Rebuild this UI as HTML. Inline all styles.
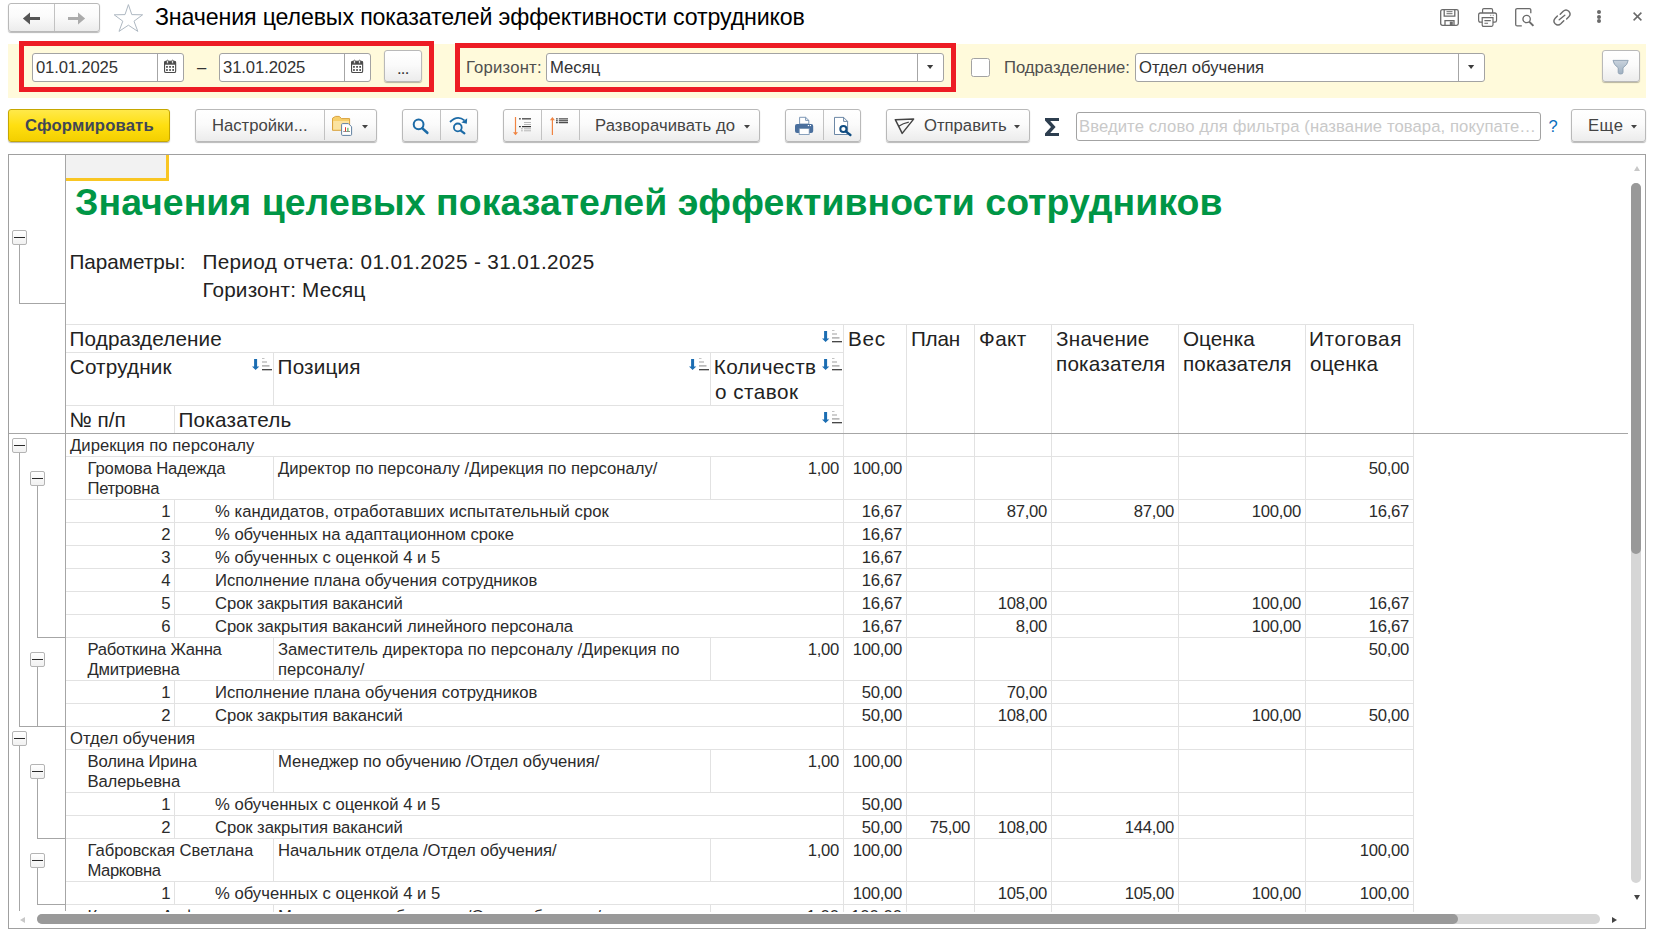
<!DOCTYPE html>
<html><head><meta charset="utf-8"><title>1C</title>
<style>
html,body{margin:0;padding:0;background:#fff;}
body{width:1655px;height:935px;overflow:hidden;position:relative;font-family:"Liberation Sans",sans-serif;}
.t{position:absolute;white-space:nowrap;}
.b{position:absolute;box-sizing:border-box;}
.btn{position:absolute;box-sizing:border-box;border:1px solid #b9b9b9;border-radius:3px;background:linear-gradient(#ffffff 0%,#fbfbfb 45%,#ececec 100%);box-shadow:0 1px 1px rgba(0,0,0,.28);}
.inp{position:absolute;box-sizing:border-box;border:1px solid #a3a3a3;border-radius:3px;background:#fff;}
svg{position:absolute;overflow:visible;}
</style></head><body>
<div class="btn" style="left:8px;top:3px;width:92px;height:29px;"></div>
<div class="b" style="left:54px;top:4px;width:1px;height:27px;background:#c2c2c2;"></div>
<div class="t" style="left:155.0px;top:3.46px;font-size:23.2px;line-height:29px;color:#000;letter-spacing:-0.14px;">Значения целевых показателей эффективности сотрудников</div>
<svg style="left:1440px;top:9px" width="19" height="17" viewBox="0 0 19 17" fill="none" stroke="#6a6a6a" stroke-width="1.3"><path d="M2.5 0.7 H16.5 Q18.3 0.7 18.3 2.5 V14.5 Q18.3 16.3 16.5 16.3 H2.5 Q0.7 16.3 0.7 14.5 V2.5 Q0.7 0.7 2.5 0.7 Z"/><path d="M4.2 0.7 V7.2 H14.8 V0.7"/><path d="M6.5 2.7 H12.5 M6.5 4.7 H12.5" stroke-width="1"/><path d="M5 16.3 V11.6 H14 V16.3"/><rect x="9.8" y="12.6" width="3" height="3.7" fill="#6a6a6a" stroke="none"/></svg>
<svg style="left:1478px;top:8px" width="19.2" height="19" viewBox="0 0 21 19" preserveAspectRatio="none" fill="none" stroke="#6a6a6a" stroke-width="1.3"><path d="M5 5 V2.2 Q5 0.7 6.5 0.7 H14.5 Q16 0.7 16 2.2 V5"/><path d="M4.6 14.2 H2.6 Q0.7 14.2 0.7 12.3 V7 Q0.7 5 2.6 5 H18.4 Q20.3 5 20.3 7 V12.3 Q20.3 14.2 18.4 14.2 H16.4"/><path d="M4.6 9.6 H16.4 V16.8 Q16.4 18.3 14.9 18.3 H6.1 Q4.6 18.3 4.6 16.8 Z"/><path d="M7 12.6 H14 M7 15.2 H11" stroke-width="1.1"/><path d="M13.6 7.3 H14.4 M16.2 7.3 H17" stroke-width="1.2"/></svg>
<svg style="left:1515px;top:8px" width="20" height="19" viewBox="0 0 20 19" fill="none" stroke="#6a6a6a" stroke-width="1.3"><path d="M15.8 5.2 V2.2 Q15.8 0.7 14.3 0.7 H2.2 Q0.7 0.7 0.7 2.2 V16.4 Q0.7 17.9 2.2 17.9 H6.8"/><circle cx="11.6" cy="11" r="3.7"/><path d="M14.4 13.9 L18.4 17.9" stroke-width="2"/></svg>
<svg style="left:1552px;top:8px" width="20" height="19" viewBox="0 0 20 19" fill="none" stroke="#6a6a6a" stroke-width="1.4" stroke-linecap="round"><path d="M8.2 6.2 L11.2 3.2 Q14 0.6 16.8 3.2 Q19.4 6 16.8 8.8 L14.6 11"/><path d="M11.8 12.8 L8.8 15.8 Q6 18.4 3.2 15.8 Q0.6 13 3.2 10.2 L5.4 8"/><path d="M7.2 11.8 L12.8 7.2"/></svg>
<div class="b" style="left:1597px;top:9.6px;width:4px;height:4px;background:#6a6a6a;border-radius:50%;"></div>
<div class="b" style="left:1597px;top:14.5px;width:4px;height:4px;background:#6a6a6a;border-radius:50%;"></div>
<div class="b" style="left:1597px;top:19.3px;width:4px;height:4px;background:#6a6a6a;border-radius:50%;"></div>
<svg style="left:1633px;top:12.3px" width="9" height="9" viewBox="0 0 9 9" stroke="#6a6a6a" stroke-width="1.5" fill="none"><path d="M0.6 0.6 L8.4 8.4 M8.4 0.6 L0.6 8.4"/></svg>
<div class="b" style="left:8px;top:44px;width:1638px;height:54px;background:#fffadb;"></div>
<div class="b" style="left:19px;top:41px;width:415px;height:51px;border:5px solid #ed1c24;"></div>
<div class="b" style="left:455px;top:43px;width:501px;height:49px;border:5px solid #ed1c24;"></div>
<div class="inp" style="left:32px;top:53px;width:152px;height:29px;"></div>
<div class="b" style="left:157px;top:54px;width:1px;height:27px;background:#a6a6a6;"></div>
<svg style="left:164px;top:60px" width="13" height="13" viewBox="0 0 13 13"><rect x="0.55" y="1.3" width="11.1" height="11.2" rx="1.3" fill="#fff" stroke="#4a4a4a" stroke-width="1.1"/><rect x="0.55" y="1.3" width="11.1" height="3.4" fill="#4a4a4a"/><ellipse cx="3.5" cy="1.9" rx="0.95" ry="1.75" fill="#fff" stroke="#4a4a4a" stroke-width="0.8"/><ellipse cx="8.6" cy="1.9" rx="0.95" ry="1.75" fill="#fff" stroke="#4a4a4a" stroke-width="0.8"/><g fill="#333"><rect x="2.1" y="6.1" width="1.7" height="1.6"/><rect x="5.2" y="6.1" width="1.7" height="1.6"/><rect x="8.3" y="6.1" width="1.7" height="1.6"/><rect x="2.1" y="9.2" width="1.7" height="1.6"/><rect x="5.2" y="9.2" width="1.7" height="1.6"/><rect x="8.3" y="9.2" width="1.7" height="1.6"/></g></svg>
<div class="inp" style="left:219px;top:53px;width:152px;height:29px;"></div>
<div class="b" style="left:344px;top:54px;width:1px;height:27px;background:#a6a6a6;"></div>
<svg style="left:351px;top:60px" width="13" height="13" viewBox="0 0 13 13"><rect x="0.55" y="1.3" width="11.1" height="11.2" rx="1.3" fill="#fff" stroke="#4a4a4a" stroke-width="1.1"/><rect x="0.55" y="1.3" width="11.1" height="3.4" fill="#4a4a4a"/><ellipse cx="3.5" cy="1.9" rx="0.95" ry="1.75" fill="#fff" stroke="#4a4a4a" stroke-width="0.8"/><ellipse cx="8.6" cy="1.9" rx="0.95" ry="1.75" fill="#fff" stroke="#4a4a4a" stroke-width="0.8"/><g fill="#333"><rect x="2.1" y="6.1" width="1.7" height="1.6"/><rect x="5.2" y="6.1" width="1.7" height="1.6"/><rect x="8.3" y="6.1" width="1.7" height="1.6"/><rect x="2.1" y="9.2" width="1.7" height="1.6"/><rect x="5.2" y="9.2" width="1.7" height="1.6"/><rect x="8.3" y="9.2" width="1.7" height="1.6"/></g></svg>
<div class="t" style="left:36.0px;top:57.02px;font-size:16.67px;line-height:21px;color:#333;letter-spacing:-0.156px;">01.01.2025</div>
<div class="t" style="left:223.0px;top:57.02px;font-size:16.67px;line-height:21px;color:#333;letter-spacing:-0.111px;">31.01.2025</div>
<div class="t" style="left:197px;top:57.02px;font-size:16.67px;line-height:21px;color:#333;">–</div>
<div class="btn" style="left:384px;top:50px;width:38px;height:32px;"></div>
<div class="t" style="left:397.0px;top:57.72px;font-size:16.67px;line-height:21px;color:#333;letter-spacing:-0.8px;">...</div>
<div class="t" style="left:466.0px;top:57.02px;font-size:16.67px;line-height:21px;color:#4f4f4f;letter-spacing:0.2px;">Горизонт:</div>
<div class="inp" style="left:546px;top:53px;width:398px;height:29px;"></div>
<div class="b" style="left:917px;top:54px;width:1px;height:27px;background:#a6a6a6;"></div>
<svg style="left:926.8px;top:64.9px" width="6.2" height="4" viewBox="0 0 6.2 4"><path d="M0 0 H6.2 L3.1 4 Z" fill="#3c3c3c"/></svg>
<div class="t" style="left:550.0px;top:57.02px;font-size:16.67px;line-height:21px;color:#333;">Месяц</div>
<div class="b" style="left:971px;top:58px;width:19px;height:19px;background:#fff;border:1px solid #a3a3a3;border-radius:2.5px;"></div>
<div class="t" style="left:1004.0px;top:57.02px;font-size:16.67px;line-height:21px;color:#4f4f4f;">Подразделение:</div>
<div class="inp" style="left:1135px;top:53px;width:350px;height:29px;"></div>
<div class="b" style="left:1458px;top:54px;width:1px;height:27px;background:#a6a6a6;"></div>
<svg style="left:1467.9px;top:64.9px" width="6.2" height="4" viewBox="0 0 6.2 4"><path d="M0 0 H6.2 L3.1 4 Z" fill="#3c3c3c"/></svg>
<div class="t" style="left:1139.0px;top:57.02px;font-size:16.67px;line-height:21px;color:#333;">Отдел обучения</div>
<div class="btn" style="left:1602px;top:50px;width:38px;height:32px;"></div>
<svg style="left:0;top:0" width="1655" height="100" viewBox="0 0 1655 100"><defs><linearGradient id="fg" x1="0" y1="0" x2="0" y2="1"><stop offset="0" stop-color="#c9d3dd"/><stop offset="1" stop-color="#9fb0c1"/></linearGradient></defs><path d="M1613 60.4 H1628.2 Q1627.6 64.8 1623 67.8 V72.4 Q1623 74 1620.6 74 Q1618.2 74 1618.2 72.4 V67.8 Q1613.6 64.8 1613 60.4 Z" fill="url(#fg)" stroke="#8d9fb1" stroke-width="0.9" stroke-linejoin="round"/></svg>
<div class="btn" style="left:8px;top:109px;width:162px;height:32.5px;border-color:#c6a700;background:linear-gradient(#ffe94a 0%,#ffdf10 50%,#f3cf00 100%);"></div>
<div class="t" style="left:25.0px;top:114.92px;font-size:16.67px;line-height:21px;color:#414756;font-weight:bold;letter-spacing:0.164px;">Сформировать</div>
<div class="btn" style="left:195px;top:109px;width:182px;height:32.5px;"></div>
<div class="b" style="left:324px;top:110px;width:1px;height:30px;background:#c2c2c2;"></div>
<div class="t" style="left:212.0px;top:114.92px;font-size:16.67px;line-height:21px;color:#444;">Настройки...</div>
<div class="btn" style="left:402px;top:109px;width:76px;height:32.5px;"></div>
<div class="b" style="left:440px;top:110px;width:1px;height:30px;background:#c2c2c2;"></div>
<div class="btn" style="left:503px;top:109px;width:257px;height:32.5px;"></div>
<div class="b" style="left:541px;top:110px;width:1px;height:30px;background:#c2c2c2;"></div>
<div class="b" style="left:579px;top:110px;width:1px;height:30px;background:#c2c2c2;"></div>
<div class="t" style="left:595.0px;top:114.92px;font-size:16.67px;line-height:21px;color:#444;letter-spacing:0.08px;">Разворачивать до</div>
<div class="btn" style="left:785px;top:109px;width:76px;height:32.5px;"></div>
<div class="b" style="left:823px;top:110px;width:1px;height:30px;background:#c2c2c2;"></div>
<div class="btn" style="left:886px;top:109px;width:143.5999999999999px;height:32.5px;"></div>
<div class="t" style="left:924.0px;top:114.92px;font-size:16.67px;line-height:21px;color:#444;">Отправить</div>
<div class="inp" style="left:1076px;top:112px;width:465px;height:29px;"></div>
<div class="t" style="left:1079.0px;top:116.22px;font-size:16.67px;line-height:21px;color:#c9c9c9;letter-spacing:0.085px;">Введите слово для фильтра (название товара, покупате…</div>
<div class="t" style="left:1548.6px;top:115.78px;font-size:16.5px;line-height:21px;color:#0a6ebd;">?</div>
<div class="btn" style="left:1571px;top:109px;width:75px;height:32.5px;"></div>
<div class="t" style="left:1588.0px;top:114.92px;font-size:16.67px;line-height:21px;color:#444;letter-spacing:0.5px;">Еще</div>
<svg style="left:362px;top:125px" width="6" height="4" viewBox="0 0 6 4"><path d="M0 0 H6 L3 3.4 Z" fill="#444"/></svg>
<svg style="left:744px;top:125px" width="6" height="4" viewBox="0 0 6 4"><path d="M0 0 H6 L3 3.4 Z" fill="#444"/></svg>
<svg style="left:1014px;top:125px" width="6" height="4" viewBox="0 0 6 4"><path d="M0 0 H6 L3 3.4 Z" fill="#444"/></svg>
<svg style="left:1631px;top:125px" width="6" height="4" viewBox="0 0 6 4"><path d="M0 0 H6 L3 3.4 Z" fill="#444"/></svg>
<svg style="left:1044px;top:118px" width="16" height="18" viewBox="0 0 16 18"><path d="M1 0 H15 V3 H6.2 L11.6 9 L6.2 15 H15 V18 H1 V15.6 L7 9 L1 2.4 Z" fill="#2d3e4f"/></svg>
<div class="b" style="left:8px;top:154px;width:1638px;height:775px;border:1px solid #a0a0a0;background:#fff;"></div>
<div class="b" style="left:65px;top:155px;width:1px;height:756px;background:#a6a6a6;"></div>
<div class="b" style="left:66px;top:155px;width:103px;height:26px;background:#f2f2f2;border-right:3px solid #f9c623;border-bottom:3px solid #f9c623;"></div>
<div class="t" style="left:75.0px;top:178.52px;font-size:37.45px;line-height:47px;color:#009646;font-weight:bold;letter-spacing:0.034px;">Значения целевых показателей эффективности сотрудников</div>
<div class="t" style="left:69.4px;top:249.33px;font-size:20.7px;line-height:26px;color:#222;">Параметры:</div>
<div class="t" style="left:202.4px;top:249.33px;font-size:20.7px;line-height:26px;color:#222;letter-spacing:0.368px;">Период отчета: 01.01.2025 - 31.01.2025</div>
<div class="t" style="left:202.4px;top:276.83px;font-size:20.7px;line-height:26px;color:#222;letter-spacing:0.214px;">Горизонт: Месяц</div>
<div class="b" style="left:66px;top:324px;width:1348px;height:1px;background:#e2e2e2;"></div>
<div class="b" style="left:66px;top:352px;width:778px;height:1px;background:#e2e2e2;"></div>
<div class="b" style="left:66px;top:405px;width:778px;height:1px;background:#e2e2e2;"></div>
<div class="b" style="left:843px;top:324px;width:1px;height:109px;background:#e2e2e2;"></div>
<div class="b" style="left:906px;top:324px;width:1px;height:109px;background:#e2e2e2;"></div>
<div class="b" style="left:974px;top:324px;width:1px;height:109px;background:#e2e2e2;"></div>
<div class="b" style="left:1051px;top:324px;width:1px;height:109px;background:#e2e2e2;"></div>
<div class="b" style="left:1178px;top:324px;width:1px;height:109px;background:#e2e2e2;"></div>
<div class="b" style="left:1305px;top:324px;width:1px;height:109px;background:#e2e2e2;"></div>
<div class="b" style="left:1413px;top:324px;width:1px;height:109px;background:#e2e2e2;"></div>
<div class="b" style="left:273px;top:352px;width:1px;height:53px;background:#e2e2e2;"></div>
<div class="b" style="left:710px;top:352px;width:1px;height:53px;background:#e2e2e2;"></div>
<div class="b" style="left:174px;top:405px;width:1px;height:28px;background:#e2e2e2;"></div>
<div class="b" style="left:9px;top:433px;width:1619px;height:1px;background:#a6a6a6;"></div>
<div class="t" style="left:69.6px;top:325.83px;font-size:20.7px;line-height:26px;color:#222;letter-spacing:0.117px;">Подразделение</div>
<div class="t" style="left:69.8px;top:353.83px;font-size:20.7px;line-height:26px;color:#222;letter-spacing:0.15px;">Сотрудник</div>
<div class="t" style="left:277.6px;top:353.83px;font-size:20.7px;line-height:26px;color:#222;letter-spacing:0.167px;">Позиция</div>
<div class="t" style="left:713.8px;top:353.83px;font-size:20.7px;line-height:26px;color:#222;letter-spacing:0.3px;">Количеств</div>
<div class="t" style="left:715.0px;top:378.83px;font-size:20.7px;line-height:26px;color:#222;letter-spacing:0.486px;">о ставок</div>
<div class="t" style="left:69.6px;top:406.83px;font-size:20.7px;line-height:26px;color:#222;">№ п/п</div>
<div class="t" style="left:178.4px;top:406.83px;font-size:20.7px;line-height:26px;color:#222;letter-spacing:0.267px;">Показатель</div>
<div class="t" style="left:848.0px;top:325.83px;font-size:20.7px;line-height:26px;color:#222;letter-spacing:0.75px;">Вес</div>
<div class="t" style="left:911.0px;top:325.83px;font-size:20.7px;line-height:26px;color:#222;letter-spacing:-0.267px;">План</div>
<div class="t" style="left:979.0px;top:325.83px;font-size:20.7px;line-height:26px;color:#222;letter-spacing:0.4px;">Факт</div>
<div class="t" style="left:1056.0px;top:325.83px;font-size:20.7px;line-height:26px;color:#222;letter-spacing:0.229px;">Значение</div>
<div class="t" style="left:1056.0px;top:350.83px;font-size:20.7px;line-height:26px;color:#222;letter-spacing:0.2px;">показателя</div>
<div class="t" style="left:1183.0px;top:325.83px;font-size:20.7px;line-height:26px;color:#222;">Оценка</div>
<div class="t" style="left:1183.0px;top:350.83px;font-size:20.7px;line-height:26px;color:#222;letter-spacing:0.111px;">показателя</div>
<div class="t" style="left:1309.0px;top:325.83px;font-size:20.7px;line-height:26px;color:#222;letter-spacing:0.686px;">Итоговая</div>
<div class="t" style="left:1310.0px;top:350.83px;font-size:20.7px;line-height:26px;color:#222;letter-spacing:0.2px;">оценка</div>
<svg style="left:822px;top:330px" width="21" height="13" viewBox="0 0 21 13"><path d="M2.1 0.9 H5.1 V8.4 H7.3 L3.6 11.9 L0 8.4 H2.1 Z" fill="#1b6db2"/><rect x="10" y="0" width="2.5" height="0.8" fill="#b5b5b5"/><rect x="10" y="3.4" width="5" height="1.2" fill="#b0b0b0"/><rect x="10" y="7.3" width="7.5" height="1.2" fill="#9a9a9a"/><rect x="10" y="11.1" width="10" height="1.2" fill="#333"/></svg>
<svg style="left:252px;top:358px" width="21" height="13" viewBox="0 0 21 13"><path d="M2.1 0.9 H5.1 V8.4 H7.3 L3.6 11.9 L0 8.4 H2.1 Z" fill="#1b6db2"/><rect x="10" y="0" width="2.5" height="0.8" fill="#b5b5b5"/><rect x="10" y="3.4" width="5" height="1.2" fill="#b0b0b0"/><rect x="10" y="7.3" width="7.5" height="1.2" fill="#9a9a9a"/><rect x="10" y="11.1" width="10" height="1.2" fill="#333"/></svg>
<svg style="left:689px;top:358px" width="21" height="13" viewBox="0 0 21 13"><path d="M2.1 0.9 H5.1 V8.4 H7.3 L3.6 11.9 L0 8.4 H2.1 Z" fill="#1b6db2"/><rect x="10" y="0" width="2.5" height="0.8" fill="#b5b5b5"/><rect x="10" y="3.4" width="5" height="1.2" fill="#b0b0b0"/><rect x="10" y="7.3" width="7.5" height="1.2" fill="#9a9a9a"/><rect x="10" y="11.1" width="10" height="1.2" fill="#333"/></svg>
<svg style="left:822px;top:358px" width="21" height="13" viewBox="0 0 21 13"><path d="M2.1 0.9 H5.1 V8.4 H7.3 L3.6 11.9 L0 8.4 H2.1 Z" fill="#1b6db2"/><rect x="10" y="0" width="2.5" height="0.8" fill="#b5b5b5"/><rect x="10" y="3.4" width="5" height="1.2" fill="#b0b0b0"/><rect x="10" y="7.3" width="7.5" height="1.2" fill="#9a9a9a"/><rect x="10" y="11.1" width="10" height="1.2" fill="#333"/></svg>
<svg style="left:822px;top:411px" width="21" height="13" viewBox="0 0 21 13"><path d="M2.1 0.9 H5.1 V8.4 H7.3 L3.6 11.9 L0 8.4 H2.1 Z" fill="#1b6db2"/><rect x="10" y="0" width="2.5" height="0.8" fill="#b5b5b5"/><rect x="10" y="3.4" width="5" height="1.2" fill="#b0b0b0"/><rect x="10" y="7.3" width="7.5" height="1.2" fill="#9a9a9a"/><rect x="10" y="11.1" width="10" height="1.2" fill="#333"/></svg>
<div class="b" style="left:12px;top:230px;width:15px;height:15px;border:1px solid #b4b4b4;border-radius:2px;background:linear-gradient(#fff,#f1f1f1);"></div>
<div class="b" style="left:14.4px;top:237px;width:10.3px;height:1px;background:#2a2a2a;"></div>
<div class="b" style="left:19px;top:245px;width:1px;height:59px;background:#a6a6a6;"></div>
<div class="b" style="left:19px;top:303px;width:46px;height:1px;background:#a6a6a6;"></div>
<div class="b" style="left:66px;top:456px;width:1348px;height:1px;background:#e2e2e2;"></div>
<div class="b" style="left:843px;top:434px;width:1px;height:22px;background:#e2e2e2;"></div>
<div class="b" style="left:906px;top:434px;width:1px;height:22px;background:#e2e2e2;"></div>
<div class="b" style="left:974px;top:434px;width:1px;height:22px;background:#e2e2e2;"></div>
<div class="b" style="left:1051px;top:434px;width:1px;height:22px;background:#e2e2e2;"></div>
<div class="b" style="left:1178px;top:434px;width:1px;height:22px;background:#e2e2e2;"></div>
<div class="b" style="left:1305px;top:434px;width:1px;height:22px;background:#e2e2e2;"></div>
<div class="b" style="left:1413px;top:434px;width:1px;height:22px;background:#e2e2e2;"></div>
<div class="t" style="left:70.0px;top:434.72px;font-size:16.67px;line-height:21px;color:#2b2b2b;letter-spacing:0.04px;">Дирекция по персоналу</div>
<div class="b" style="left:66px;top:499px;width:1348px;height:1px;background:#e2e2e2;"></div>
<div class="b" style="left:843px;top:457px;width:1px;height:42px;background:#e2e2e2;"></div>
<div class="b" style="left:906px;top:457px;width:1px;height:42px;background:#e2e2e2;"></div>
<div class="b" style="left:974px;top:457px;width:1px;height:42px;background:#e2e2e2;"></div>
<div class="b" style="left:1051px;top:457px;width:1px;height:42px;background:#e2e2e2;"></div>
<div class="b" style="left:1178px;top:457px;width:1px;height:42px;background:#e2e2e2;"></div>
<div class="b" style="left:1305px;top:457px;width:1px;height:42px;background:#e2e2e2;"></div>
<div class="b" style="left:1413px;top:457px;width:1px;height:42px;background:#e2e2e2;"></div>
<div class="b" style="left:273px;top:457px;width:1px;height:42px;background:#e2e2e2;"></div>
<div class="b" style="left:710px;top:457px;width:1px;height:42px;background:#e2e2e2;"></div>
<div class="t" style="left:87.5px;top:457.72px;font-size:16.67px;line-height:21px;color:#2b2b2b;letter-spacing:-0.143px;">Громова Надежда</div>
<div class="t" style="left:87.5px;top:477.72px;font-size:16.67px;line-height:21px;color:#2b2b2b;letter-spacing:-0.314px;">Петровна</div>
<div class="t" style="left:278.0px;top:457.72px;font-size:16.67px;line-height:21px;color:#2b2b2b;">Директор по персоналу /Дирекция по персоналу/</div>
<div class="t" style="left:439px;width:400px;text-align:right;top:457.72px;font-size:16.67px;line-height:21px;color:#2b2b2b;letter-spacing:-0.3px;">1,00</div>
<div class="t" style="left:502px;width:400px;text-align:right;top:457.72px;font-size:16.67px;line-height:21px;color:#2b2b2b;letter-spacing:-0.3px;">100,00</div>
<div class="t" style="left:1009px;width:400px;text-align:right;top:457.72px;font-size:16.67px;line-height:21px;color:#2b2b2b;letter-spacing:-0.3px;">50,00</div>
<div class="b" style="left:66px;top:522px;width:1348px;height:1px;background:#e2e2e2;"></div>
<div class="b" style="left:843px;top:500px;width:1px;height:22px;background:#e2e2e2;"></div>
<div class="b" style="left:906px;top:500px;width:1px;height:22px;background:#e2e2e2;"></div>
<div class="b" style="left:974px;top:500px;width:1px;height:22px;background:#e2e2e2;"></div>
<div class="b" style="left:1051px;top:500px;width:1px;height:22px;background:#e2e2e2;"></div>
<div class="b" style="left:1178px;top:500px;width:1px;height:22px;background:#e2e2e2;"></div>
<div class="b" style="left:1305px;top:500px;width:1px;height:22px;background:#e2e2e2;"></div>
<div class="b" style="left:1413px;top:500px;width:1px;height:22px;background:#e2e2e2;"></div>
<div class="b" style="left:174px;top:500px;width:1px;height:22px;background:#e2e2e2;"></div>
<div class="t" style="left:-229.6px;width:400px;text-align:right;top:500.72px;font-size:16.67px;line-height:21px;color:#2b2b2b;">1</div>
<div class="t" style="left:215.0px;top:500.72px;font-size:16.67px;line-height:21px;color:#2b2b2b;letter-spacing:0.055px;">% кандидатов, отработавших испытательный срок</div>
<div class="t" style="left:502px;width:400px;text-align:right;top:500.72px;font-size:16.67px;line-height:21px;color:#2b2b2b;letter-spacing:-0.3px;">16,67</div>
<div class="t" style="left:647px;width:400px;text-align:right;top:500.72px;font-size:16.67px;line-height:21px;color:#2b2b2b;letter-spacing:-0.3px;">87,00</div>
<div class="t" style="left:774px;width:400px;text-align:right;top:500.72px;font-size:16.67px;line-height:21px;color:#2b2b2b;letter-spacing:-0.3px;">87,00</div>
<div class="t" style="left:901px;width:400px;text-align:right;top:500.72px;font-size:16.67px;line-height:21px;color:#2b2b2b;letter-spacing:-0.3px;">100,00</div>
<div class="t" style="left:1009px;width:400px;text-align:right;top:500.72px;font-size:16.67px;line-height:21px;color:#2b2b2b;letter-spacing:-0.3px;">16,67</div>
<div class="b" style="left:66px;top:545px;width:1348px;height:1px;background:#e2e2e2;"></div>
<div class="b" style="left:843px;top:523px;width:1px;height:22px;background:#e2e2e2;"></div>
<div class="b" style="left:906px;top:523px;width:1px;height:22px;background:#e2e2e2;"></div>
<div class="b" style="left:974px;top:523px;width:1px;height:22px;background:#e2e2e2;"></div>
<div class="b" style="left:1051px;top:523px;width:1px;height:22px;background:#e2e2e2;"></div>
<div class="b" style="left:1178px;top:523px;width:1px;height:22px;background:#e2e2e2;"></div>
<div class="b" style="left:1305px;top:523px;width:1px;height:22px;background:#e2e2e2;"></div>
<div class="b" style="left:1413px;top:523px;width:1px;height:22px;background:#e2e2e2;"></div>
<div class="b" style="left:174px;top:523px;width:1px;height:22px;background:#e2e2e2;"></div>
<div class="t" style="left:-229.6px;width:400px;text-align:right;top:523.72px;font-size:16.67px;line-height:21px;color:#2b2b2b;">2</div>
<div class="t" style="left:215.0px;top:523.72px;font-size:16.67px;line-height:21px;color:#2b2b2b;letter-spacing:-0.03px;">% обученных на адаптационном сроке</div>
<div class="t" style="left:502px;width:400px;text-align:right;top:523.72px;font-size:16.67px;line-height:21px;color:#2b2b2b;letter-spacing:-0.3px;">16,67</div>
<div class="b" style="left:66px;top:568px;width:1348px;height:1px;background:#e2e2e2;"></div>
<div class="b" style="left:843px;top:546px;width:1px;height:22px;background:#e2e2e2;"></div>
<div class="b" style="left:906px;top:546px;width:1px;height:22px;background:#e2e2e2;"></div>
<div class="b" style="left:974px;top:546px;width:1px;height:22px;background:#e2e2e2;"></div>
<div class="b" style="left:1051px;top:546px;width:1px;height:22px;background:#e2e2e2;"></div>
<div class="b" style="left:1178px;top:546px;width:1px;height:22px;background:#e2e2e2;"></div>
<div class="b" style="left:1305px;top:546px;width:1px;height:22px;background:#e2e2e2;"></div>
<div class="b" style="left:1413px;top:546px;width:1px;height:22px;background:#e2e2e2;"></div>
<div class="b" style="left:174px;top:546px;width:1px;height:22px;background:#e2e2e2;"></div>
<div class="t" style="left:-229.6px;width:400px;text-align:right;top:546.72px;font-size:16.67px;line-height:21px;color:#2b2b2b;">3</div>
<div class="t" style="left:215.0px;top:546.72px;font-size:16.67px;line-height:21px;color:#2b2b2b;">% обученных с оценкой 4 и 5</div>
<div class="t" style="left:502px;width:400px;text-align:right;top:546.72px;font-size:16.67px;line-height:21px;color:#2b2b2b;letter-spacing:-0.3px;">16,67</div>
<div class="b" style="left:66px;top:591px;width:1348px;height:1px;background:#e2e2e2;"></div>
<div class="b" style="left:843px;top:569px;width:1px;height:22px;background:#e2e2e2;"></div>
<div class="b" style="left:906px;top:569px;width:1px;height:22px;background:#e2e2e2;"></div>
<div class="b" style="left:974px;top:569px;width:1px;height:22px;background:#e2e2e2;"></div>
<div class="b" style="left:1051px;top:569px;width:1px;height:22px;background:#e2e2e2;"></div>
<div class="b" style="left:1178px;top:569px;width:1px;height:22px;background:#e2e2e2;"></div>
<div class="b" style="left:1305px;top:569px;width:1px;height:22px;background:#e2e2e2;"></div>
<div class="b" style="left:1413px;top:569px;width:1px;height:22px;background:#e2e2e2;"></div>
<div class="b" style="left:174px;top:569px;width:1px;height:22px;background:#e2e2e2;"></div>
<div class="t" style="left:-229.6px;width:400px;text-align:right;top:569.72px;font-size:16.67px;line-height:21px;color:#2b2b2b;">4</div>
<div class="t" style="left:215.0px;top:569.72px;font-size:16.67px;line-height:21px;color:#2b2b2b;">Исполнение плана обучения сотрудников</div>
<div class="t" style="left:502px;width:400px;text-align:right;top:569.72px;font-size:16.67px;line-height:21px;color:#2b2b2b;letter-spacing:-0.3px;">16,67</div>
<div class="b" style="left:66px;top:614px;width:1348px;height:1px;background:#e2e2e2;"></div>
<div class="b" style="left:843px;top:592px;width:1px;height:22px;background:#e2e2e2;"></div>
<div class="b" style="left:906px;top:592px;width:1px;height:22px;background:#e2e2e2;"></div>
<div class="b" style="left:974px;top:592px;width:1px;height:22px;background:#e2e2e2;"></div>
<div class="b" style="left:1051px;top:592px;width:1px;height:22px;background:#e2e2e2;"></div>
<div class="b" style="left:1178px;top:592px;width:1px;height:22px;background:#e2e2e2;"></div>
<div class="b" style="left:1305px;top:592px;width:1px;height:22px;background:#e2e2e2;"></div>
<div class="b" style="left:1413px;top:592px;width:1px;height:22px;background:#e2e2e2;"></div>
<div class="b" style="left:174px;top:592px;width:1px;height:22px;background:#e2e2e2;"></div>
<div class="t" style="left:-229.6px;width:400px;text-align:right;top:592.72px;font-size:16.67px;line-height:21px;color:#2b2b2b;">5</div>
<div class="t" style="left:215.0px;top:592.72px;font-size:16.67px;line-height:21px;color:#2b2b2b;letter-spacing:-0.076px;">Срок закрытия вакансий</div>
<div class="t" style="left:502px;width:400px;text-align:right;top:592.72px;font-size:16.67px;line-height:21px;color:#2b2b2b;letter-spacing:-0.3px;">16,67</div>
<div class="t" style="left:647px;width:400px;text-align:right;top:592.72px;font-size:16.67px;line-height:21px;color:#2b2b2b;letter-spacing:-0.3px;">108,00</div>
<div class="t" style="left:901px;width:400px;text-align:right;top:592.72px;font-size:16.67px;line-height:21px;color:#2b2b2b;letter-spacing:-0.3px;">100,00</div>
<div class="t" style="left:1009px;width:400px;text-align:right;top:592.72px;font-size:16.67px;line-height:21px;color:#2b2b2b;letter-spacing:-0.3px;">16,67</div>
<div class="b" style="left:66px;top:637px;width:1348px;height:1px;background:#e2e2e2;"></div>
<div class="b" style="left:843px;top:615px;width:1px;height:22px;background:#e2e2e2;"></div>
<div class="b" style="left:906px;top:615px;width:1px;height:22px;background:#e2e2e2;"></div>
<div class="b" style="left:974px;top:615px;width:1px;height:22px;background:#e2e2e2;"></div>
<div class="b" style="left:1051px;top:615px;width:1px;height:22px;background:#e2e2e2;"></div>
<div class="b" style="left:1178px;top:615px;width:1px;height:22px;background:#e2e2e2;"></div>
<div class="b" style="left:1305px;top:615px;width:1px;height:22px;background:#e2e2e2;"></div>
<div class="b" style="left:1413px;top:615px;width:1px;height:22px;background:#e2e2e2;"></div>
<div class="b" style="left:174px;top:615px;width:1px;height:22px;background:#e2e2e2;"></div>
<div class="t" style="left:-229.6px;width:400px;text-align:right;top:615.72px;font-size:16.67px;line-height:21px;color:#2b2b2b;">6</div>
<div class="t" style="left:215.0px;top:615.72px;font-size:16.67px;line-height:21px;color:#2b2b2b;letter-spacing:-0.088px;">Срок закрытия вакансий линейного персонала</div>
<div class="t" style="left:502px;width:400px;text-align:right;top:615.72px;font-size:16.67px;line-height:21px;color:#2b2b2b;letter-spacing:-0.3px;">16,67</div>
<div class="t" style="left:647px;width:400px;text-align:right;top:615.72px;font-size:16.67px;line-height:21px;color:#2b2b2b;letter-spacing:-0.3px;">8,00</div>
<div class="t" style="left:901px;width:400px;text-align:right;top:615.72px;font-size:16.67px;line-height:21px;color:#2b2b2b;letter-spacing:-0.3px;">100,00</div>
<div class="t" style="left:1009px;width:400px;text-align:right;top:615.72px;font-size:16.67px;line-height:21px;color:#2b2b2b;letter-spacing:-0.3px;">16,67</div>
<div class="b" style="left:66px;top:680px;width:1348px;height:1px;background:#e2e2e2;"></div>
<div class="b" style="left:843px;top:638px;width:1px;height:42px;background:#e2e2e2;"></div>
<div class="b" style="left:906px;top:638px;width:1px;height:42px;background:#e2e2e2;"></div>
<div class="b" style="left:974px;top:638px;width:1px;height:42px;background:#e2e2e2;"></div>
<div class="b" style="left:1051px;top:638px;width:1px;height:42px;background:#e2e2e2;"></div>
<div class="b" style="left:1178px;top:638px;width:1px;height:42px;background:#e2e2e2;"></div>
<div class="b" style="left:1305px;top:638px;width:1px;height:42px;background:#e2e2e2;"></div>
<div class="b" style="left:1413px;top:638px;width:1px;height:42px;background:#e2e2e2;"></div>
<div class="b" style="left:273px;top:638px;width:1px;height:42px;background:#e2e2e2;"></div>
<div class="b" style="left:710px;top:638px;width:1px;height:42px;background:#e2e2e2;"></div>
<div class="t" style="left:87.5px;top:638.72px;font-size:16.67px;line-height:21px;color:#2b2b2b;letter-spacing:-0.264px;">Работкина Жанна</div>
<div class="t" style="left:87.5px;top:658.72px;font-size:16.67px;line-height:21px;color:#2b2b2b;letter-spacing:-0.289px;">Дмитриевна</div>
<div class="t" style="left:278.0px;top:638.72px;font-size:16.67px;line-height:21px;color:#2b2b2b;letter-spacing:0.02px;">Заместитель директора по персоналу /Дирекция по</div>
<div class="t" style="left:278px;top:658.72px;font-size:16.67px;line-height:21px;color:#2b2b2b;">персоналу/</div>
<div class="t" style="left:439px;width:400px;text-align:right;top:638.72px;font-size:16.67px;line-height:21px;color:#2b2b2b;letter-spacing:-0.3px;">1,00</div>
<div class="t" style="left:502px;width:400px;text-align:right;top:638.72px;font-size:16.67px;line-height:21px;color:#2b2b2b;letter-spacing:-0.3px;">100,00</div>
<div class="t" style="left:1009px;width:400px;text-align:right;top:638.72px;font-size:16.67px;line-height:21px;color:#2b2b2b;letter-spacing:-0.3px;">50,00</div>
<div class="b" style="left:66px;top:703px;width:1348px;height:1px;background:#e2e2e2;"></div>
<div class="b" style="left:843px;top:681px;width:1px;height:22px;background:#e2e2e2;"></div>
<div class="b" style="left:906px;top:681px;width:1px;height:22px;background:#e2e2e2;"></div>
<div class="b" style="left:974px;top:681px;width:1px;height:22px;background:#e2e2e2;"></div>
<div class="b" style="left:1051px;top:681px;width:1px;height:22px;background:#e2e2e2;"></div>
<div class="b" style="left:1178px;top:681px;width:1px;height:22px;background:#e2e2e2;"></div>
<div class="b" style="left:1305px;top:681px;width:1px;height:22px;background:#e2e2e2;"></div>
<div class="b" style="left:1413px;top:681px;width:1px;height:22px;background:#e2e2e2;"></div>
<div class="b" style="left:174px;top:681px;width:1px;height:22px;background:#e2e2e2;"></div>
<div class="t" style="left:-229.6px;width:400px;text-align:right;top:681.72px;font-size:16.67px;line-height:21px;color:#2b2b2b;">1</div>
<div class="t" style="left:215.0px;top:681.72px;font-size:16.67px;line-height:21px;color:#2b2b2b;">Исполнение плана обучения сотрудников</div>
<div class="t" style="left:502px;width:400px;text-align:right;top:681.72px;font-size:16.67px;line-height:21px;color:#2b2b2b;letter-spacing:-0.3px;">50,00</div>
<div class="t" style="left:647px;width:400px;text-align:right;top:681.72px;font-size:16.67px;line-height:21px;color:#2b2b2b;letter-spacing:-0.3px;">70,00</div>
<div class="b" style="left:66px;top:726px;width:1348px;height:1px;background:#e2e2e2;"></div>
<div class="b" style="left:843px;top:704px;width:1px;height:22px;background:#e2e2e2;"></div>
<div class="b" style="left:906px;top:704px;width:1px;height:22px;background:#e2e2e2;"></div>
<div class="b" style="left:974px;top:704px;width:1px;height:22px;background:#e2e2e2;"></div>
<div class="b" style="left:1051px;top:704px;width:1px;height:22px;background:#e2e2e2;"></div>
<div class="b" style="left:1178px;top:704px;width:1px;height:22px;background:#e2e2e2;"></div>
<div class="b" style="left:1305px;top:704px;width:1px;height:22px;background:#e2e2e2;"></div>
<div class="b" style="left:1413px;top:704px;width:1px;height:22px;background:#e2e2e2;"></div>
<div class="b" style="left:174px;top:704px;width:1px;height:22px;background:#e2e2e2;"></div>
<div class="t" style="left:-229.6px;width:400px;text-align:right;top:704.72px;font-size:16.67px;line-height:21px;color:#2b2b2b;">2</div>
<div class="t" style="left:215.0px;top:704.72px;font-size:16.67px;line-height:21px;color:#2b2b2b;letter-spacing:-0.076px;">Срок закрытия вакансий</div>
<div class="t" style="left:502px;width:400px;text-align:right;top:704.72px;font-size:16.67px;line-height:21px;color:#2b2b2b;letter-spacing:-0.3px;">50,00</div>
<div class="t" style="left:647px;width:400px;text-align:right;top:704.72px;font-size:16.67px;line-height:21px;color:#2b2b2b;letter-spacing:-0.3px;">108,00</div>
<div class="t" style="left:901px;width:400px;text-align:right;top:704.72px;font-size:16.67px;line-height:21px;color:#2b2b2b;letter-spacing:-0.3px;">100,00</div>
<div class="t" style="left:1009px;width:400px;text-align:right;top:704.72px;font-size:16.67px;line-height:21px;color:#2b2b2b;letter-spacing:-0.3px;">50,00</div>
<div class="b" style="left:66px;top:749px;width:1348px;height:1px;background:#e2e2e2;"></div>
<div class="b" style="left:843px;top:727px;width:1px;height:22px;background:#e2e2e2;"></div>
<div class="b" style="left:906px;top:727px;width:1px;height:22px;background:#e2e2e2;"></div>
<div class="b" style="left:974px;top:727px;width:1px;height:22px;background:#e2e2e2;"></div>
<div class="b" style="left:1051px;top:727px;width:1px;height:22px;background:#e2e2e2;"></div>
<div class="b" style="left:1178px;top:727px;width:1px;height:22px;background:#e2e2e2;"></div>
<div class="b" style="left:1305px;top:727px;width:1px;height:22px;background:#e2e2e2;"></div>
<div class="b" style="left:1413px;top:727px;width:1px;height:22px;background:#e2e2e2;"></div>
<div class="t" style="left:70.0px;top:727.72px;font-size:16.67px;line-height:21px;color:#2b2b2b;">Отдел обучения</div>
<div class="b" style="left:66px;top:792px;width:1348px;height:1px;background:#e2e2e2;"></div>
<div class="b" style="left:843px;top:750px;width:1px;height:42px;background:#e2e2e2;"></div>
<div class="b" style="left:906px;top:750px;width:1px;height:42px;background:#e2e2e2;"></div>
<div class="b" style="left:974px;top:750px;width:1px;height:42px;background:#e2e2e2;"></div>
<div class="b" style="left:1051px;top:750px;width:1px;height:42px;background:#e2e2e2;"></div>
<div class="b" style="left:1178px;top:750px;width:1px;height:42px;background:#e2e2e2;"></div>
<div class="b" style="left:1305px;top:750px;width:1px;height:42px;background:#e2e2e2;"></div>
<div class="b" style="left:1413px;top:750px;width:1px;height:42px;background:#e2e2e2;"></div>
<div class="b" style="left:273px;top:750px;width:1px;height:42px;background:#e2e2e2;"></div>
<div class="b" style="left:710px;top:750px;width:1px;height:42px;background:#e2e2e2;"></div>
<div class="t" style="left:87.5px;top:750.72px;font-size:16.67px;line-height:21px;color:#2b2b2b;letter-spacing:-0.155px;">Волина Ирина</div>
<div class="t" style="left:87.5px;top:770.72px;font-size:16.67px;line-height:21px;color:#2b2b2b;letter-spacing:-0.133px;">Валерьевна</div>
<div class="t" style="left:278.0px;top:750.72px;font-size:16.67px;line-height:21px;color:#2b2b2b;letter-spacing:-0.047px;">Менеджер по обучению /Отдел обучения/</div>
<div class="t" style="left:439px;width:400px;text-align:right;top:750.72px;font-size:16.67px;line-height:21px;color:#2b2b2b;letter-spacing:-0.3px;">1,00</div>
<div class="t" style="left:502px;width:400px;text-align:right;top:750.72px;font-size:16.67px;line-height:21px;color:#2b2b2b;letter-spacing:-0.3px;">100,00</div>
<div class="b" style="left:66px;top:815px;width:1348px;height:1px;background:#e2e2e2;"></div>
<div class="b" style="left:843px;top:793px;width:1px;height:22px;background:#e2e2e2;"></div>
<div class="b" style="left:906px;top:793px;width:1px;height:22px;background:#e2e2e2;"></div>
<div class="b" style="left:974px;top:793px;width:1px;height:22px;background:#e2e2e2;"></div>
<div class="b" style="left:1051px;top:793px;width:1px;height:22px;background:#e2e2e2;"></div>
<div class="b" style="left:1178px;top:793px;width:1px;height:22px;background:#e2e2e2;"></div>
<div class="b" style="left:1305px;top:793px;width:1px;height:22px;background:#e2e2e2;"></div>
<div class="b" style="left:1413px;top:793px;width:1px;height:22px;background:#e2e2e2;"></div>
<div class="b" style="left:174px;top:793px;width:1px;height:22px;background:#e2e2e2;"></div>
<div class="t" style="left:-229.6px;width:400px;text-align:right;top:793.72px;font-size:16.67px;line-height:21px;color:#2b2b2b;">1</div>
<div class="t" style="left:215.0px;top:793.72px;font-size:16.67px;line-height:21px;color:#2b2b2b;">% обученных с оценкой 4 и 5</div>
<div class="t" style="left:502px;width:400px;text-align:right;top:793.72px;font-size:16.67px;line-height:21px;color:#2b2b2b;letter-spacing:-0.3px;">50,00</div>
<div class="b" style="left:66px;top:838px;width:1348px;height:1px;background:#e2e2e2;"></div>
<div class="b" style="left:843px;top:816px;width:1px;height:22px;background:#e2e2e2;"></div>
<div class="b" style="left:906px;top:816px;width:1px;height:22px;background:#e2e2e2;"></div>
<div class="b" style="left:974px;top:816px;width:1px;height:22px;background:#e2e2e2;"></div>
<div class="b" style="left:1051px;top:816px;width:1px;height:22px;background:#e2e2e2;"></div>
<div class="b" style="left:1178px;top:816px;width:1px;height:22px;background:#e2e2e2;"></div>
<div class="b" style="left:1305px;top:816px;width:1px;height:22px;background:#e2e2e2;"></div>
<div class="b" style="left:1413px;top:816px;width:1px;height:22px;background:#e2e2e2;"></div>
<div class="b" style="left:174px;top:816px;width:1px;height:22px;background:#e2e2e2;"></div>
<div class="t" style="left:-229.6px;width:400px;text-align:right;top:816.72px;font-size:16.67px;line-height:21px;color:#2b2b2b;">2</div>
<div class="t" style="left:215.0px;top:816.72px;font-size:16.67px;line-height:21px;color:#2b2b2b;letter-spacing:-0.076px;">Срок закрытия вакансий</div>
<div class="t" style="left:502px;width:400px;text-align:right;top:816.72px;font-size:16.67px;line-height:21px;color:#2b2b2b;letter-spacing:-0.3px;">50,00</div>
<div class="t" style="left:570px;width:400px;text-align:right;top:816.72px;font-size:16.67px;line-height:21px;color:#2b2b2b;letter-spacing:-0.3px;">75,00</div>
<div class="t" style="left:647px;width:400px;text-align:right;top:816.72px;font-size:16.67px;line-height:21px;color:#2b2b2b;letter-spacing:-0.3px;">108,00</div>
<div class="t" style="left:774px;width:400px;text-align:right;top:816.72px;font-size:16.67px;line-height:21px;color:#2b2b2b;letter-spacing:-0.3px;">144,00</div>
<div class="b" style="left:66px;top:881px;width:1348px;height:1px;background:#e2e2e2;"></div>
<div class="b" style="left:843px;top:839px;width:1px;height:42px;background:#e2e2e2;"></div>
<div class="b" style="left:906px;top:839px;width:1px;height:42px;background:#e2e2e2;"></div>
<div class="b" style="left:974px;top:839px;width:1px;height:42px;background:#e2e2e2;"></div>
<div class="b" style="left:1051px;top:839px;width:1px;height:42px;background:#e2e2e2;"></div>
<div class="b" style="left:1178px;top:839px;width:1px;height:42px;background:#e2e2e2;"></div>
<div class="b" style="left:1305px;top:839px;width:1px;height:42px;background:#e2e2e2;"></div>
<div class="b" style="left:1413px;top:839px;width:1px;height:42px;background:#e2e2e2;"></div>
<div class="b" style="left:273px;top:839px;width:1px;height:42px;background:#e2e2e2;"></div>
<div class="b" style="left:710px;top:839px;width:1px;height:42px;background:#e2e2e2;"></div>
<div class="t" style="left:87.5px;top:839.72px;font-size:16.67px;line-height:21px;color:#2b2b2b;letter-spacing:-0.078px;">Габровская Светлана</div>
<div class="t" style="left:87.5px;top:859.72px;font-size:16.67px;line-height:21px;color:#2b2b2b;letter-spacing:-0.457px;">Марковна</div>
<div class="t" style="left:278.0px;top:839.72px;font-size:16.67px;line-height:21px;color:#2b2b2b;letter-spacing:-0.041px;">Начальник отдела /Отдел обучения/</div>
<div class="t" style="left:439px;width:400px;text-align:right;top:839.72px;font-size:16.67px;line-height:21px;color:#2b2b2b;letter-spacing:-0.3px;">1,00</div>
<div class="t" style="left:502px;width:400px;text-align:right;top:839.72px;font-size:16.67px;line-height:21px;color:#2b2b2b;letter-spacing:-0.3px;">100,00</div>
<div class="t" style="left:1009px;width:400px;text-align:right;top:839.72px;font-size:16.67px;line-height:21px;color:#2b2b2b;letter-spacing:-0.3px;">100,00</div>
<div class="b" style="left:66px;top:904px;width:1348px;height:1px;background:#e2e2e2;"></div>
<div class="b" style="left:843px;top:882px;width:1px;height:22px;background:#e2e2e2;"></div>
<div class="b" style="left:906px;top:882px;width:1px;height:22px;background:#e2e2e2;"></div>
<div class="b" style="left:974px;top:882px;width:1px;height:22px;background:#e2e2e2;"></div>
<div class="b" style="left:1051px;top:882px;width:1px;height:22px;background:#e2e2e2;"></div>
<div class="b" style="left:1178px;top:882px;width:1px;height:22px;background:#e2e2e2;"></div>
<div class="b" style="left:1305px;top:882px;width:1px;height:22px;background:#e2e2e2;"></div>
<div class="b" style="left:1413px;top:882px;width:1px;height:22px;background:#e2e2e2;"></div>
<div class="b" style="left:174px;top:882px;width:1px;height:22px;background:#e2e2e2;"></div>
<div class="t" style="left:-229.6px;width:400px;text-align:right;top:882.72px;font-size:16.67px;line-height:21px;color:#2b2b2b;">1</div>
<div class="t" style="left:215.0px;top:882.72px;font-size:16.67px;line-height:21px;color:#2b2b2b;">% обученных с оценкой 4 и 5</div>
<div class="t" style="left:502px;width:400px;text-align:right;top:882.72px;font-size:16.67px;line-height:21px;color:#2b2b2b;letter-spacing:-0.3px;">100,00</div>
<div class="t" style="left:647px;width:400px;text-align:right;top:882.72px;font-size:16.67px;line-height:21px;color:#2b2b2b;letter-spacing:-0.3px;">105,00</div>
<div class="t" style="left:774px;width:400px;text-align:right;top:882.72px;font-size:16.67px;line-height:21px;color:#2b2b2b;letter-spacing:-0.3px;">105,00</div>
<div class="t" style="left:901px;width:400px;text-align:right;top:882.72px;font-size:16.67px;line-height:21px;color:#2b2b2b;letter-spacing:-0.3px;">100,00</div>
<div class="t" style="left:1009px;width:400px;text-align:right;top:882.72px;font-size:16.67px;line-height:21px;color:#2b2b2b;letter-spacing:-0.3px;">100,00</div>
<div class="b" style="left:66px;top:905px;width:1348px;height:7.4px;overflow:hidden;">
<div class="t" style="left:21.5px;top:0.7px;font-size:16.67px;line-height:21px;color:#2b2b2b;">Круглова Анфиса</div>
<div class="t" style="left:212px;top:0.7px;font-size:16.67px;line-height:21px;color:#2b2b2b;">Менеджер по обучению /Отдел обучения/</div>
<div class="t" style="left:373px;top:0.7px;width:400px;text-align:right;font-size:16.67px;line-height:21px;color:#2b2b2b;">1,00</div>
<div class="t" style="left:436px;top:0.7px;width:400px;text-align:right;font-size:16.67px;line-height:21px;color:#2b2b2b;">100,00</div>
</div>
<div class="b" style="left:843px;top:905px;width:1px;height:7px;background:#e2e2e2;"></div>
<div class="b" style="left:906px;top:905px;width:1px;height:7px;background:#e2e2e2;"></div>
<div class="b" style="left:974px;top:905px;width:1px;height:7px;background:#e2e2e2;"></div>
<div class="b" style="left:1051px;top:905px;width:1px;height:7px;background:#e2e2e2;"></div>
<div class="b" style="left:1178px;top:905px;width:1px;height:7px;background:#e2e2e2;"></div>
<div class="b" style="left:1305px;top:905px;width:1px;height:7px;background:#e2e2e2;"></div>
<div class="b" style="left:1413px;top:905px;width:1px;height:7px;background:#e2e2e2;"></div>
<div class="b" style="left:273px;top:905px;width:1px;height:7px;background:#e2e2e2;"></div>
<div class="b" style="left:710px;top:905px;width:1px;height:7px;background:#e2e2e2;"></div>
<div class="b" style="left:12px;top:438px;width:15px;height:15px;border:1px solid #b4b4b4;border-radius:2px;background:linear-gradient(#fff,#f1f1f1);"></div>
<div class="b" style="left:14.4px;top:445px;width:10.3px;height:1px;background:#2a2a2a;"></div>
<div class="b" style="left:19px;top:453px;width:1px;height:274px;background:#a6a6a6;"></div>
<div class="b" style="left:19px;top:726px;width:46px;height:1px;background:#a6a6a6;"></div>
<div class="b" style="left:12px;top:731px;width:15px;height:15px;border:1px solid #b4b4b4;border-radius:2px;background:linear-gradient(#fff,#f1f1f1);"></div>
<div class="b" style="left:14.4px;top:738px;width:10.3px;height:1px;background:#2a2a2a;"></div>
<div class="b" style="left:19px;top:746px;width:1px;height:165px;background:#a6a6a6;"></div>
<div class="b" style="left:30px;top:471px;width:15px;height:15px;border:1px solid #b4b4b4;border-radius:2px;background:linear-gradient(#fff,#f1f1f1);"></div>
<div class="b" style="left:32.4px;top:478px;width:10.3px;height:1px;background:#2a2a2a;"></div>
<div class="b" style="left:37px;top:486px;width:1px;height:152px;background:#a6a6a6;"></div>
<div class="b" style="left:37px;top:637px;width:28px;height:1px;background:#a6a6a6;"></div>
<div class="b" style="left:30px;top:652px;width:15px;height:15px;border:1px solid #b4b4b4;border-radius:2px;background:linear-gradient(#fff,#f1f1f1);"></div>
<div class="b" style="left:32.4px;top:659px;width:10.3px;height:1px;background:#2a2a2a;"></div>
<div class="b" style="left:37px;top:667px;width:1px;height:60px;background:#a6a6a6;"></div>
<div class="b" style="left:30px;top:764px;width:15px;height:15px;border:1px solid #b4b4b4;border-radius:2px;background:linear-gradient(#fff,#f1f1f1);"></div>
<div class="b" style="left:32.4px;top:771px;width:10.3px;height:1px;background:#2a2a2a;"></div>
<div class="b" style="left:37px;top:779px;width:1px;height:60px;background:#a6a6a6;"></div>
<div class="b" style="left:37px;top:838px;width:28px;height:1px;background:#a6a6a6;"></div>
<div class="b" style="left:30px;top:853px;width:15px;height:15px;border:1px solid #b4b4b4;border-radius:2px;background:linear-gradient(#fff,#f1f1f1);"></div>
<div class="b" style="left:32.4px;top:860px;width:10.3px;height:1px;background:#2a2a2a;"></div>
<div class="b" style="left:37px;top:868px;width:1px;height:37px;background:#a6a6a6;"></div>
<div class="b" style="left:37px;top:904px;width:28px;height:1px;background:#a6a6a6;"></div>
<div class="b" style="left:1631px;top:183px;width:10px;height:700px;background:#d6d6d6;border-radius:5px;"></div>
<div class="b" style="left:1631px;top:183px;width:10px;height:371px;background:#999;border-radius:5px;"></div>
<svg style="left:1634px;top:166px" width="6" height="5" viewBox="0 0 6 5"><path d="M3 0 L6 5 H0 Z" fill="#c8c8c8"/></svg>
<svg style="left:1634px;top:895px" width="6" height="5" viewBox="0 0 6 5"><path d="M0 0 H6 L3 5 Z" fill="#444"/></svg>
<div class="b" style="left:37px;top:914px;width:1563px;height:10px;background:#d6d6d6;border-radius:5px;"></div>
<div class="b" style="left:37px;top:914px;width:1421px;height:10px;background:#999;border-radius:5px;"></div>
<svg style="left:20px;top:917px" width="5" height="6" viewBox="0 0 5 6"><path d="M0 3 L5 0 V6 Z" fill="#c8c8c8"/></svg>
<svg style="left:1612px;top:917px" width="5" height="6" viewBox="0 0 5 6"><path d="M5 3 L0 0 V6 Z" fill="#444"/></svg>
<svg style="left:0;top:0" width="1655" height="935" viewBox="0 0 1655 935"><path d="M22.9 18.4 L30 12.4 V17 H40 V20 H30 V24.5 Z" fill="#555"/><path d="M85.1 18.4 L78 12.4 V17 H68 V20 H78 V24.5 Z" fill="#ababab"/><path d="M128.4 4.6 L131.8 14.6 L142.6 14.8 L134 21.2 L137.8 31.4 L128.4 25.2 L119 31.4 L122.8 21.2 L114.2 14.8 L125 14.6 Z" fill="#fff" stroke="#aeb8c2" stroke-width="1" stroke-linejoin="miter"/><path d="M332.5 130.3 V118.2 L335.5 116.4 H339.2 L341.6 118.6 H349.6 V130.3 Z" fill="#f7cf6a" stroke="#d9a23e" stroke-width="1"/><path d="M333.2 121 H349 V129.6 H333.2 Z" fill="#fbe3a0"/><path d="M341.6 124.6 Q341.6 123.6 342.6 123.6 H348.4 L351.6 126.8 V134.4 Q351.6 135.4 350.6 135.4 H342.6 Q341.6 135.4 341.6 134.4 Z" fill="#fff" stroke="#5f7f9f" stroke-width="1"/><path d="M343.2 131.5 H350" stroke="#777" stroke-width="0.8"/><rect x="345" y="127.2" width="1" height="4.2" fill="#e03a2f"/><rect x="347.4" y="127.8" width="1" height="3.6" fill="#3aa33a"/><circle cx="418.6" cy="124.3" r="4.9" fill="none" stroke="#1b6aa6" stroke-width="2"/><path d="M422.4 128.4 L427.3 132.8" stroke="#1b6aa6" stroke-width="2.6" stroke-linecap="round"/><circle cx="457.8" cy="127.4" r="3.9" fill="none" stroke="#1b6aa6" stroke-width="1.8"/><path d="M460.8 130.6 L464.4 133.4" stroke="#1b6aa6" stroke-width="2.2" stroke-linecap="round"/><path d="M450 122 Q457.5 114.6 464.4 120.4" fill="none" stroke="#1b6aa6" stroke-width="1.8"/><path d="M467.2 118.2 L466.8 123.8 L461.4 122.6 Z" fill="#1b6aa6"/><path d="M515.5 117 V133" stroke="#f08442" stroke-width="1.2"/><path d="M513 132.2 H518 L515.5 135.2 Z" fill="#f08442"/><rect x="522" y="118.3" width="9" height="1.1" fill="#222"/><rect x="524" y="122.2" width="7" height="0.7" fill="#9a9a9a"/><rect x="524" y="124.2" width="7" height="0.7" fill="#9a9a9a"/><rect x="522" y="126.1" width="9" height="1.1" fill="#222"/><rect x="524" y="128.5" width="7" height="0.7" fill="#9a9a9a"/><rect x="524" y="130.5" width="7" height="0.7" fill="#9a9a9a"/><rect x="519" y="118.3" width="1.8" height="1.1" fill="#222"/><rect x="519" y="126.1" width="1.8" height="1.1" fill="#222"/><rect x="521" y="128.5" width="1.8" height="0.7" fill="#9a9a9a"/><rect x="521" y="130.5" width="1.8" height="0.7" fill="#9a9a9a"/><path d="M552.4 120 V135" stroke="#f08442" stroke-width="1.2"/><path d="M549.9 120.2 H554.9 L552.4 117 Z" fill="#f08442"/><rect x="558.8" y="118.4" width="9.2" height="1" fill="#222"/><rect x="556" y="118.4" width="1.8" height="1" fill="#222"/><rect x="558.8" y="120.3" width="9.2" height="1" fill="#222"/><rect x="556" y="120.3" width="1.8" height="1" fill="#222"/><rect x="558.8" y="122.2" width="9.2" height="1" fill="#222"/><rect x="556" y="122.2" width="1.8" height="1" fill="#222"/><path d="M799.6 124 V117.3 H805.6 L808.8 120.4 V124 Z" fill="#fff" stroke="#6f8cae" stroke-width="0.9"/><path d="M805.6 117.3 V120.4 H808.8" fill="none" stroke="#6f8cae" stroke-width="0.9"/><rect x="795" y="123.9" width="18.2" height="9.2" rx="2" fill="#4a6f9d"/><rect x="799.2" y="128.4" width="10" height="6" fill="#fff" stroke="#6f8cae" stroke-width="0.8"/><rect x="807.8" y="125" width="1.2" height="1.1" fill="#fff"/><rect x="809.8" y="125" width="1.2" height="1.1" fill="#fff"/><path d="M834.5 117.4 H843.6 L847.6 121.4 V134.5 H834.5 Z" fill="#fff" stroke="#5c7a9c" stroke-width="0.9"/><path d="M843.6 117.4 V121.4 H847.6" fill="none" stroke="#5c7a9c" stroke-width="0.9"/><circle cx="843.4" cy="129" r="3.1" fill="#fff" stroke="#0f4c81" stroke-width="2"/><path d="M846 131.6 L850.4 135" stroke="#0f4c81" stroke-width="2.4" stroke-linecap="round"/><path d="M895.3 119.7 L913.6 119.1 L902.2 133.4 L898.7 126.3 Z" fill="none" stroke="#444" stroke-width="1.5" stroke-linejoin="round"/><path d="M898.7 126.3 Q903 123.4 908.8 122.2" fill="none" stroke="#444" stroke-width="1.3"/></svg>
</body></html>
